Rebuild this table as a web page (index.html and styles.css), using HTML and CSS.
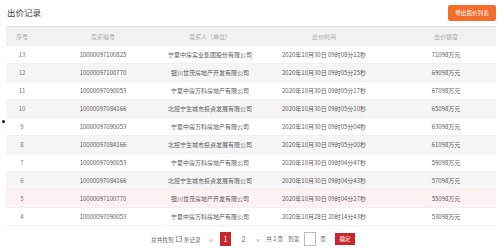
FILE: index.html
```html
<!DOCTYPE html>
<html lang="zh">
<head>
<meta charset="utf-8">
<link rel="stylesheet" href="styles.css">
</head>
<body>
<div class="page">
  <span class="bullet"></span>
  <div class="topbar">
    <div class="title">出价记录</div>
    <button class="export">导出报价列表</button>
  </div>
  <table class="grid">
    <colgroup>
      <col class="c1"><col class="c2"><col class="c3"><col class="c4"><col class="c5">
    </colgroup>
    <thead>
      <tr><th>序号</th><th>竞买编号</th><th>竞买人（单位）</th><th>出价时间</th><th>出价额度</th></tr>
    </thead>
    <tbody>
      <tr><td>13</td><td>10000097100825</td><td>宁夏中房实业集团股份有限公司</td><td>2020年10月30日 09时08分12秒</td><td>71098万元</td></tr>
      <tr class="alt"><td>12</td><td>10000097100770</td><td>银川世茂房地产开发有限公司</td><td>2020年10月30日 09时05分25秒</td><td>69098万元</td></tr>
      <tr><td>11</td><td>10000097090053</td><td>宁夏中房万科房地产有限公司</td><td>2020年10月30日 09时05分17秒</td><td>67098万元</td></tr>
      <tr class="alt"><td>10</td><td>10000097084166</td><td>北控宁生城市投资发展有限公司</td><td>2020年10月30日 09时05分10秒</td><td>65098万元</td></tr>
      <tr><td>9</td><td>10000097090053</td><td>宁夏中房万科房地产有限公司</td><td>2020年10月30日 09时05分04秒</td><td>63098万元</td></tr>
      <tr class="alt"><td>8</td><td>10000097084166</td><td>北控宁生城市投资发展有限公司</td><td>2020年10月30日 09时05分00秒</td><td>61098万元</td></tr>
      <tr><td>7</td><td>10000097090053</td><td>宁夏中房万科房地产有限公司</td><td>2020年10月30日 09时04分47秒</td><td>59098万元</td></tr>
      <tr class="alt"><td>6</td><td>10000097084166</td><td>北控宁生城市投资发展有限公司</td><td>2020年10月30日 09时04分43秒</td><td>57098万元</td></tr>
      <tr class="hover"><td>5</td><td>10000097100770</td><td>银川世茂房地产开发有限公司</td><td>2020年10月30日 09时04分27秒</td><td>55098万元</td></tr>
      <tr><td>4</td><td>10000097090053</td><td>宁夏中房万科房地产有限公司</td><td>2020年10月28日 20时14分43秒</td><td>53098万元</td></tr>
    </tbody>
  </table>
  <div class="pager">
    <span class="total">总共找到 <b>13</b> 条记录</span>
    <span class="arrow">«</span>
    <span class="pg active">1</span>
    <span class="pg">2</span>
    <span class="arrow">»</span>
    <span class="info">共 2 页</span>
    <span class="info">到第</span>
    <span class="goto"></span>
    <span class="info">页</span>
    <button class="ok">确定</button>
  </div>
</div>
</body>
</html>
```

FILE: styles.css
```css
* { box-sizing: border-box; }
html, body { margin: 0; padding: 0; background: #fff; }
body {
  font-family: "Noto Sans CJK SC", "Open Sans", sans-serif;
  color: #555;
}
.page {
  position: relative;
  width: 500px;
  height: 250px;
  padding: 5px 4px 0 6px;
}
.bullet {
  position: absolute;
  left: 2px;
  top: 120px;
  width: 3px;
  height: 3px;
  border-radius: 50%;
  background: #111;
}
.topbar {
  display: flex;
  justify-content: space-between;
  align-items: flex-start;
  height: 21px;
}
.title {
  font-size: 8.5px;
  line-height: 14px;
  color: #444;
  padding-left: 1px;
}
.export {
  border: 0;
  background: #f36d2c;
  color: #fff;
  font-family: inherit;
  font-size: 5.6px;
  width: 48px;
  height: 16px;
  padding: 0;
  border-radius: 2px;
}
.grid {
  width: 490px;
  border-collapse: collapse;
  table-layout: fixed;
  font-size: 6px;
}
.c1 { width: 32px; }
.c2 { width: 130px; }
.c3 { width: 84px; }
.c4 { width: 144px; }
.c5 { width: 100px; }
.grid th {
  height: 19px;
  background: #f2f2f2;
  color: #aaa;
  font-weight: normal;
  border-top: 1px solid #e8e8e8;
  padding: 0;
  text-align: center;
  white-space: nowrap;
}
.grid td {
  height: 18px;
  padding: 0;
  text-align: center;
  white-space: nowrap;
  border-bottom: 1px solid #f0f0f0;
  color: #5a5a5a;
}
.grid td:first-child { color: #777; }
.grid tr.alt td { background: #f5f5f5; }
.grid tr.hover td { background: #fdf2f2; }
.pager {
  display: flex;
  justify-content: center;
  align-items: center;
  height: 26px;
  padding-left: 4px;
  font-size: 5.6px;
  color: #666;
}
.total b { font-weight: normal; font-size: 7px; }
.total { margin-right: 9px; }
.arrow { font-size: 7px; color: #999; margin-right: 7px; }
.pg {
  width: 11px;
  height: 14px;
  display: flex;
  align-items: center;
  justify-content: center;
  font-size: 7px;
  margin-right: 7px;
}
.pg.active { background: #c9252c; color: #fff; }
.info { margin-right: 5px; }
.goto {
  width: 12px;
  height: 14px;
  border: 1px solid #bbb;
  margin-right: 4px;
}
.ok {
  border: 0;
  background: #c9252c;
  color: #fff;
  font-family: inherit;
  font-size: 5.5px;
  width: 20px;
  height: 12px;
  padding: 0;
  margin-left: 4px;
}
```
